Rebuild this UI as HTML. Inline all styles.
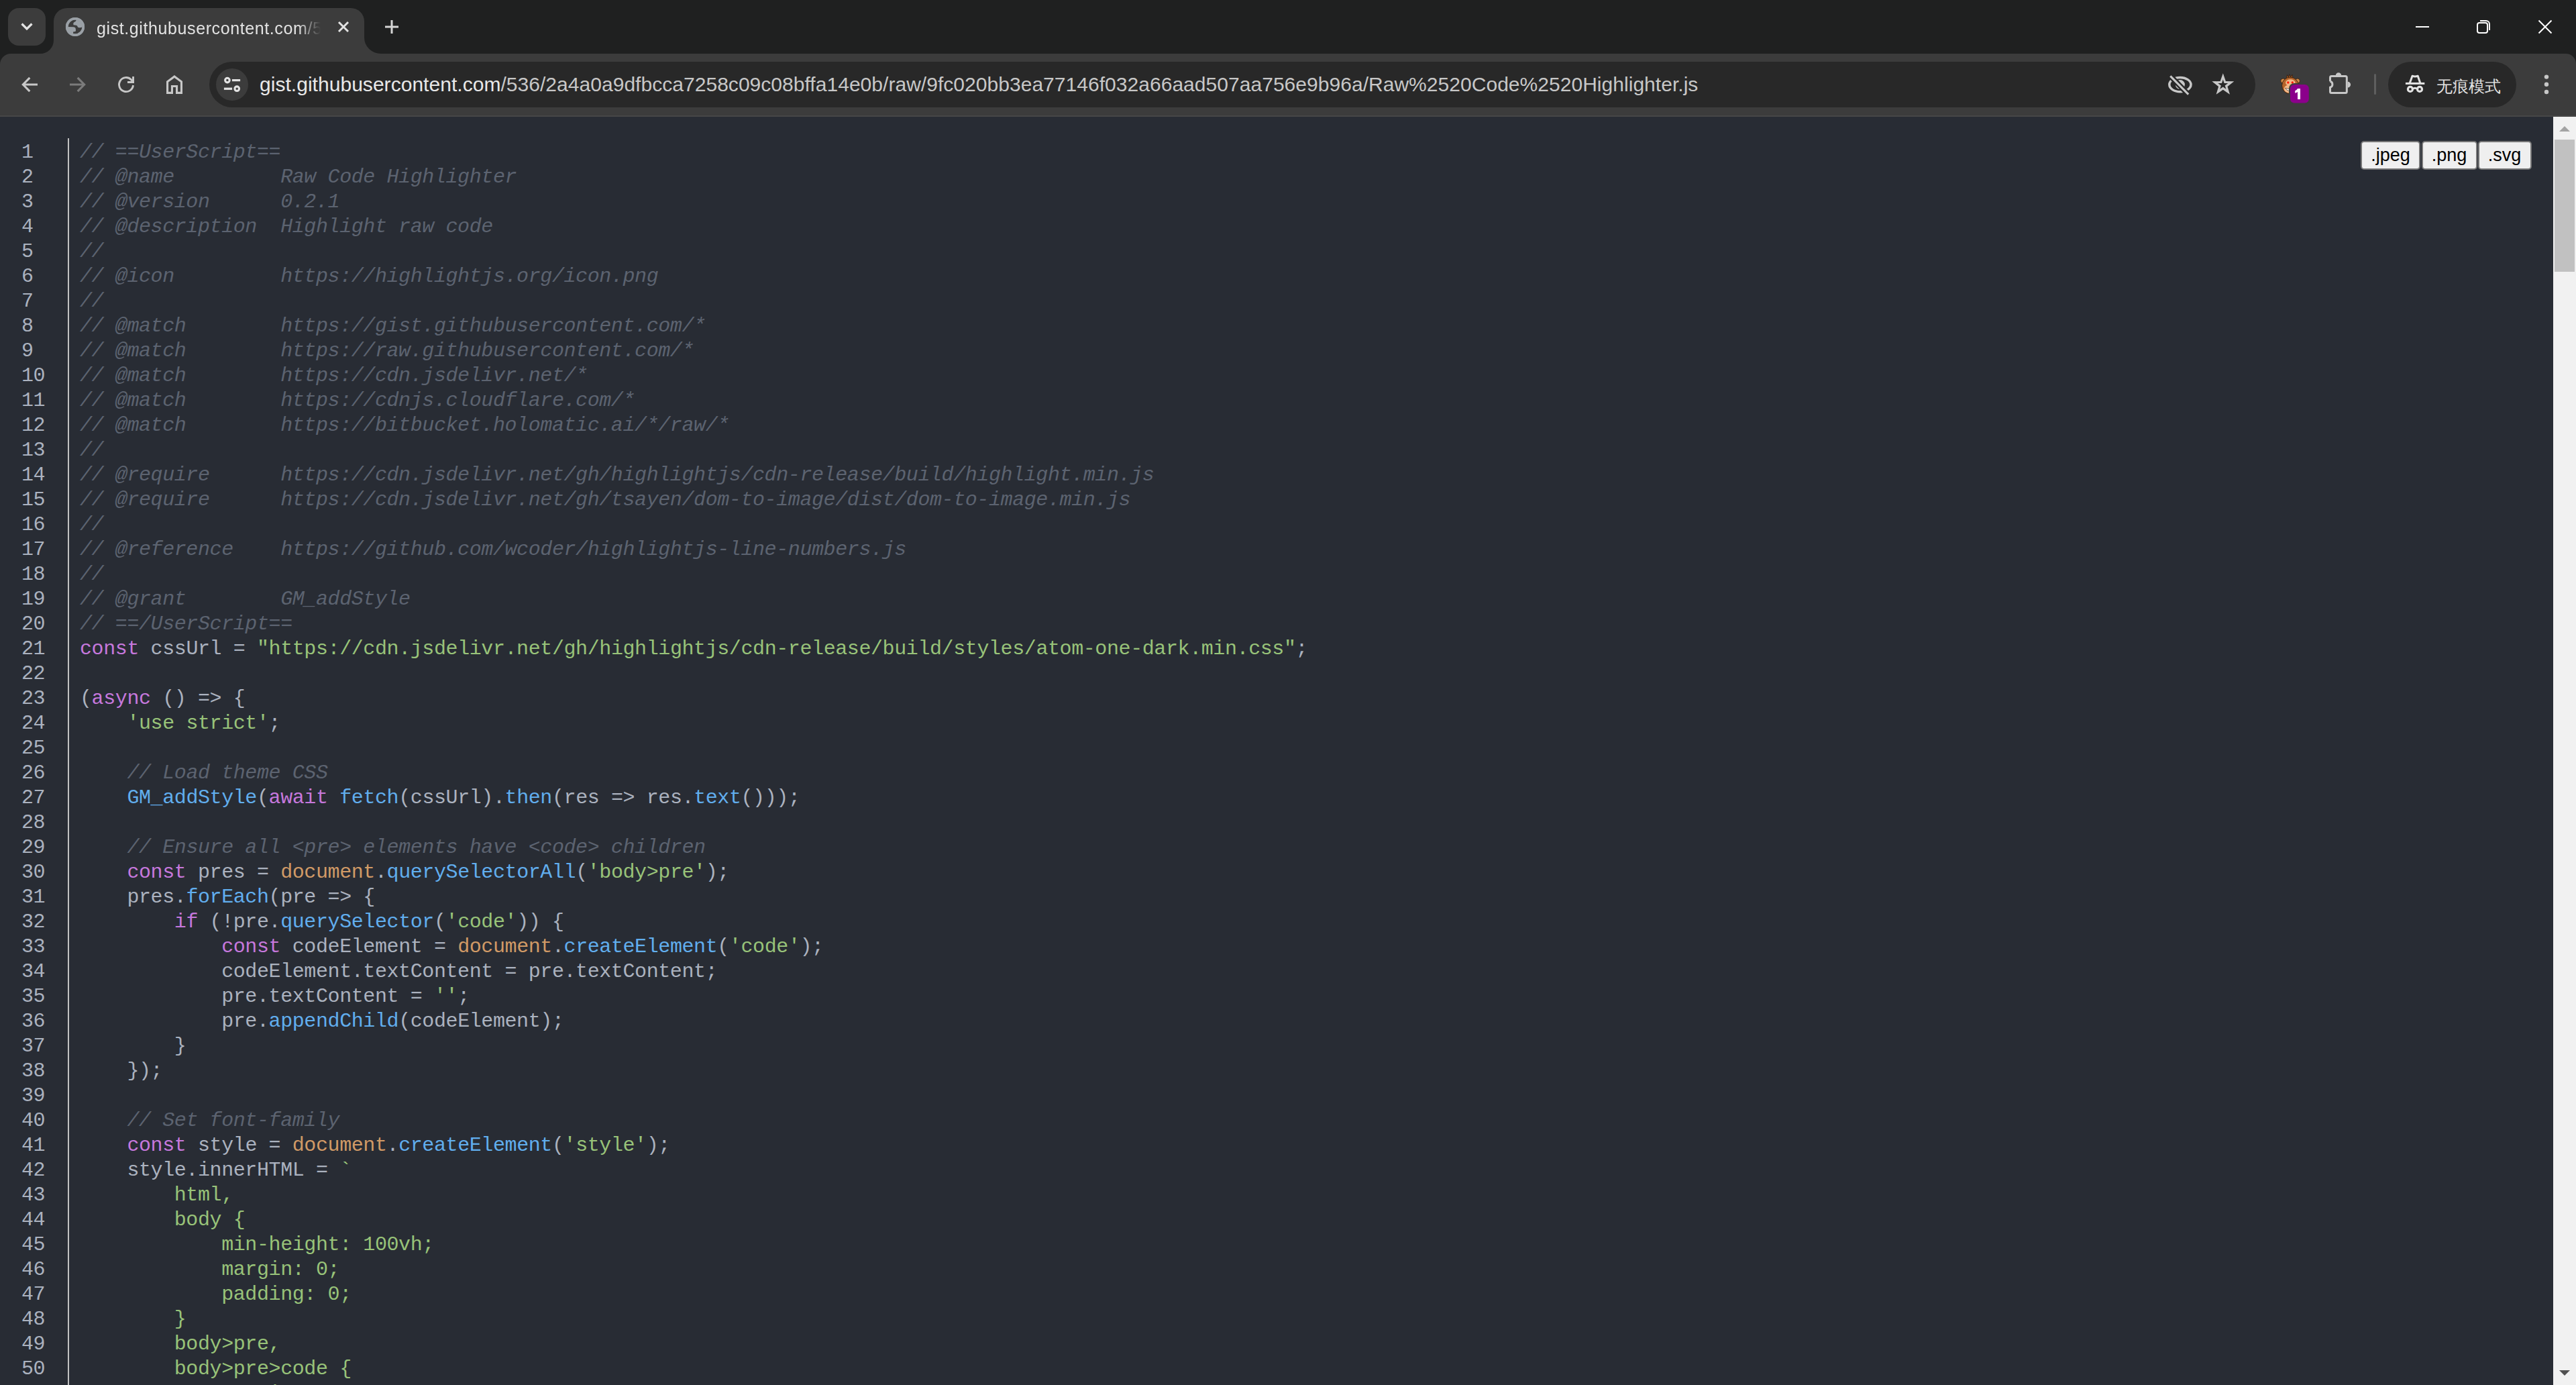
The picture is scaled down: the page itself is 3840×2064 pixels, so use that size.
<!DOCTYPE html>
<html><head><meta charset="utf-8">
<style>
*{margin:0;padding:0;box-sizing:border-box}
html,body{width:3840px;height:2064px;overflow:hidden;background:#282c34;font-family:"Liberation Sans",sans-serif}
.a{position:absolute}
#titlebar{left:0;top:0;width:3840px;height:174px;background:#1f2020}
#toolbar{left:0;top:80px;width:3840px;height:92px;background:#3c3c3c;border-radius:16px 15px 0 0}
#tbborder{left:0;top:172px;width:3840px;height:2px;background:#474747}
#ddbtn{left:12px;top:12px;width:56px;height:56px;border-radius:16px;background:#3c3c3c}
#tab{left:80px;top:12px;width:463px;height:70px;background:#3c3c3c;border-radius:20px 20px 0 0}
#tabtitle{left:144px;top:24px;width:338px;height:36px;overflow:hidden;white-space:nowrap;font-size:25px;letter-spacing:0.6px;line-height:36px;color:#e3e3e3;
 -webkit-mask-image:linear-gradient(to right,#000 0,#000 300px,transparent 334px)}
#omni{left:312px;top:92px;width:3050px;height:68px;border-radius:34px;background:#282828}
#siteinfo{left:322px;top:102px;width:48px;height:48px;border-radius:24px;background:#3c3c3c}
#url{left:387px;top:106px;height:40px;white-space:nowrap;font-size:30px;letter-spacing:0.035px;line-height:40px;color:#c7c7c7}
#url span{color:#e8e8e8}
#incog{left:3560px;top:92px;width:191px;height:68px;border-radius:34px;background:#282828}
#incogtxt{left:3632px;top:108.5px;font-size:24px;line-height:40px;color:#e3e3e3;white-space:nowrap}
#sep{left:3539px;top:110px;width:3px;height:31px;border-radius:2px;background:#5e5e5e}
#badge{left:3414px;top:126px;width:28px;height:28px;border-radius:6px;background:#8b008b;color:#fff;font-weight:bold;font-size:22px;line-height:28px;text-align:center}
#scroll{left:3806px;top:174px;width:34px;height:1890px;background:#f1f1f1}
#thumb{left:3808px;top:208px;width:30px;height:197px;background:#c1c1c1}
.btn{top:210px;height:43px;background:#efefef;border:2px solid #767676;border-radius:5px;color:#000;font-size:27px;line-height:38px;text-align:center}
#nums{left:32px;top:209px;font-family:"Liberation Mono",monospace;font-size:30px;line-height:37px;letter-spacing:-0.406px;color:#abb2bf;white-space:pre}
#vsep{left:101px;top:206px;width:2px;height:1860px;background:#c2c2c2}
#code{left:119px;top:209px;font-family:"Liberation Mono",monospace;font-size:30px;line-height:37px;letter-spacing:-0.406px;color:#abb2bf;white-space:pre}
#code i{color:#5c6370;font-style:italic}
#code b{font-weight:normal}
#code .k{color:#c678dd}
#code .s{color:#98c379}
#code .f{color:#61aeee}
#code .v{color:#d19a66}
svg{position:absolute;overflow:visible}
</style></head><body>
<div class="a" id="titlebar"></div>
<div class="a" id="toolbar"></div>
<div class="a" id="tbborder"></div>
<div class="a" id="ddbtn"></div>
<div class="a" id="tab"></div>
<!-- tab flares -->
<svg style="left:60px;top:60px" width="20" height="22"><path d="M0 20 A20 20 0 0 0 20 0 L20 22 L0 22 Z" fill="#3c3c3c"/></svg>
<svg style="left:543px;top:56px" width="25" height="26"><path d="M25 24 A25 24 0 0 1 0 0 L0 26 L25 26 Z" fill="#3c3c3c"/></svg>
<!-- chevron -->
<svg style="left:28px;top:30px" width="24" height="20"><path d="M4.5 5.5 L12 13 L19.5 5.5" fill="none" stroke="#e3e3e3" stroke-width="3.2"/></svg>
<!-- globe -->
<svg style="left:98px;top:26px" width="28" height="28" viewBox="0 0 28 28"><circle cx="14" cy="14" r="14" fill="#9aa0a6"/><circle cx="14" cy="14" r="10.6" fill="#3c3c3c"/><path d="M15.76 3.2 Q15.4 5 15 5.6 Q14 6.6 12.6 6.9 Q11.3 7.6 11.3 9 L11.5 11.3 Q14.5 11.6 16.5 12.1 Q17.6 13 17.8 14.2 Q18.8 15.3 20.7 15.2 Q23 15 24.8 13.9 A11.6 11.6 0 0 0 15.76 3.2Z M3.2 13.9 L11.6 14.2 Q13.9 14.6 14.5 15.8 Q15 17.5 15 19.4 Q14.9 20.7 14.2 20.9 L11.1 21.4 L11.1 24.4 A11.6 11.6 0 0 1 3.2 13.9Z" fill="#9aa0a6"/><circle cx="14" cy="14" r="12.25" fill="none" stroke="#9aa0a6" stroke-width="3.7"/></svg>
<div class="a" id="tabtitle">gist.githubusercontent.com/536/2a4a0a9dfbcca7258c</div>
<!-- tab close -->
<svg style="left:503px;top:31px" width="18" height="18"><path d="M2 2 L16 16 M16 2 L2 16" stroke="#e3e3e3" stroke-width="3"/></svg>
<!-- new tab -->
<svg style="left:574px;top:30px" width="20" height="20"><path d="M10 0 V20 M0 10 H20" stroke="#d5d5d5" stroke-width="3"/></svg>
<!-- window controls -->
<svg style="left:3601px;top:39px" width="20" height="3"><rect width="20" height="2" fill="#fff"/></svg>
<svg style="left:3692px;top:30px" width="20" height="20"><rect x="1" y="4" width="15" height="15" rx="3" fill="none" stroke="#fff" stroke-width="2"/><path d="M5 1 H14 A5 5 0 0 1 19 6 V15" fill="none" stroke="#fff" stroke-width="2"/></svg>
<svg style="left:3784px;top:30px" width="20" height="20"><path d="M0.5 0.5 L19.5 19.5 M19.5 0.5 L0.5 19.5" stroke="#fff" stroke-width="2"/></svg>
<!-- nav icons -->
<svg style="left:32px;top:114px" width="24" height="24"><path d="M24 12 H3.5 M12.3 1.8 L2.3 12 L12.3 22.2" fill="none" stroke="#c7c7c7" stroke-width="3.1"/></svg>
<svg style="left:104px;top:114px" width="24" height="24"><path d="M0 12 H20.5 M11.7 1.8 L21.7 12 L11.7 22.2" fill="none" stroke="#7b7b7b" stroke-width="3.1"/></svg>
<svg style="left:176px;top:114px" width="25" height="25"><path d="M22.5 13 A10.5 10.5 0 1 1 19.4 4.6 L22 7.5" fill="none" stroke="#c7c7c7" stroke-width="2.9"/><path d="M24 0 V10 H14 V7.1 H21.1 V0 Z" fill="#c7c7c7"/></svg>
<svg style="left:248px;top:112px" width="24" height="28"><path fill-rule="evenodd" d="M0 28 V9 L12 0 L24 9 V28 H14 V18.1 H10 V28 Z M3.1 24.8 H6.9 V15 H17.1 V24.8 H20.9 V10.6 L12 4 L3.1 10.6 Z" fill="#c7c7c7"/></svg>
<div class="a" id="omni"></div>
<div class="a" id="siteinfo"></div>
<svg style="left:334px;top:115px" width="26" height="24"><circle cx="4.9" cy="4.6" r="3.3" fill="none" stroke="#e3e3e3" stroke-width="3.1"/><rect x="11.9" y="3" width="12.2" height="3.2" fill="#e3e3e3"/><circle cx="19.2" cy="17.2" r="3.3" fill="none" stroke="#e3e3e3" stroke-width="3.1"/><rect x="-0.1" y="15.6" width="12.2" height="3.3" fill="#e3e3e3"/></svg>
<div class="a" id="url"><span>gist.githubusercontent.com</span>/536/2a4a0a9dfbcca7258c09c08bffa14e0b/raw/9fc020bb3ea77146f032a66aad507aa756e9b96a/Raw%2520Code%2520Highlighter.js</div>
<!-- eye slash + star -->
<svg style="left:3226px;top:104px" width="114" height="44" viewBox="0 0 114 44"><ellipse cx="23.9" cy="22.1" rx="16.1" ry="10.6" fill="none" stroke="#c7c7c7" stroke-width="3.5"/><circle cx="23.9" cy="22.1" r="7" fill="#c7c7c7"/><path d="M8.8 8.8 L36.7 37.2" stroke="#282828" stroke-width="8"/><path d="M9.3 9.3 L36.2 36.7" stroke="#c7c7c7" stroke-width="3.1"/>
<path fill-rule="evenodd" fill="#c7c7c7" d="M87.8 5.3 L91.9 16.9 L104.3 17.3 L94.5 24.9 L98 36.7 L87.8 29.7 L77.6 36.7 L81.1 24.9 L71.3 17.3 L83.7 16.9 Z M87.8 14.6 L89.6 20 L95.3 20 L90.7 23.4 L92.4 28.8 L87.8 25.5 L83.2 28.8 L84.9 23.4 L80.3 20 L86 20 Z"/></svg>
<!-- tampermonkey -->
<svg style="left:3396px;top:106px" width="50" height="50" viewBox="0 0 50 50">
<path d="M12 11 L13.6 5.6 L15.5 9 L17 4.8 L18.6 8.8 L21 5.2 L21.5 11 Z" fill="#a85a22" stroke="#2a160a" stroke-width="0.7"/>
<circle cx="7.4" cy="14.6" r="3.6" fill="#d08a4a" stroke="#2a160a" stroke-width="0.8"/>
<circle cx="28.8" cy="14.6" r="3.6" fill="#d08a4a" stroke="#2a160a" stroke-width="0.8"/>
<circle cx="18" cy="21.5" r="12.4" fill="#b5642a" stroke="#2a160a" stroke-width="0.8"/>
<ellipse cx="18.3" cy="17.3" rx="7.2" ry="5" fill="#f2b98a"/>
<ellipse cx="17.5" cy="26.5" rx="8.8" ry="6.2" fill="#f2b98a"/>
<circle cx="14.8" cy="17" r="1.7" fill="#ff1a00"/><circle cx="21.3" cy="17" r="1.7" fill="#ff1a00"/>
<path d="M10.5 25.2 L17 26.8 L16.5 29.5 Q12.5 28.8 10.5 25.2Z" fill="#fff" stroke="#2a160a" stroke-width="0.6"/>
<rect x="16" y="18" width="31.8" height="31.6" rx="8" fill="#3c3c3c"/>
<rect x="18" y="20" width="27.8" height="27.6" rx="6" fill="#8b008b"/>
<path d="M29 26 H33 V42 H29 V31 Q27.5 32.3 25.2 32.8 V29.2 Q27.8 28.3 29 26Z" fill="#fff"/>
</svg>
<!-- puzzle -->
<svg style="left:3466px;top:104px" width="44" height="44" viewBox="0 0 44 44"><path d="M7.5 17.3 V11.4 A2 2 0 0 1 9.5 9.4 H30.3 A2 2 0 0 1 32.3 11.4 V32.4 A2 2 0 0 1 30.3 34.4 H9.5 A2 2 0 0 1 7.5 32.4 V26.2 A4.6 4.6 0 0 0 7.5 17.3" fill="none" stroke="#c7c7c7" stroke-width="3"/><path d="M15.8 8.5 A4.2 4.2 0 0 1 24.2 8.5 Z M33.8 17.8 A4.3 4.3 0 0 1 33.8 26.4 Z" fill="#c7c7c7"/></svg>
<div class="a" id="sep"></div>
<div class="a" id="incog"></div>
<svg style="left:3580px;top:104px" width="44" height="44" viewBox="0 0 44 44"><rect x="5.9" y="18.9" width="28.4" height="3" fill="#e3e3e3"/><path d="M12.3 19.5 L16 9.2 Q20 10.8 24.2 9.2 L27.7 19.5" fill="none" stroke="#e3e3e3" stroke-width="3" stroke-linejoin="round"/><circle cx="12.9" cy="28.9" r="3.5" fill="none" stroke="#e3e3e3" stroke-width="3.2"/><circle cx="27" cy="28.9" r="3.5" fill="none" stroke="#e3e3e3" stroke-width="3.2"/><path d="M16.2 28.6 Q20 26 23.7 28.6" fill="none" stroke="#e3e3e3" stroke-width="3"/></svg>
<div class="a" id="incogtxt">无痕模式</div>
<!-- kebab -->
<svg style="left:3790px;top:108px" width="12" height="36"><circle cx="6" cy="6.6" r="3.2" fill="#c7c7c7"/><circle cx="6" cy="17.8" r="3.2" fill="#c7c7c7"/><circle cx="6" cy="29" r="3.2" fill="#c7c7c7"/></svg>

<!-- content -->
<div class="a" id="vsep"></div>
<div class="a" id="nums">1
2
3
4
5
6
7
8
9
10
11
12
13
14
15
16
17
18
19
20
21
22
23
24
25
26
27
28
29
30
31
32
33
34
35
36
37
38
39
40
41
42
43
44
45
46
47
48
49
50
51</div>
<div class="a" id="code"><i>// ==UserScript==</i>
<i>// @name         Raw Code Highlighter</i>
<i>// @version      0.2.1</i>
<i>// @description  Highlight raw code</i>
<i>//</i>
<i>// @icon         https://highlightjs.org/icon.png</i>
<i>//</i>
<i>// @match        https://gist.githubusercontent.com/*</i>
<i>// @match        https://raw.githubusercontent.com/*</i>
<i>// @match        https://cdn.jsdelivr.net/*</i>
<i>// @match        https://cdnjs.cloudflare.com/*</i>
<i>// @match        https://bitbucket.holomatic.ai/*/raw/*</i>
<i>//</i>
<i>// @require      https://cdn.jsdelivr.net/gh/highlightjs/cdn-release/build/highlight.min.js</i>
<i>// @require      https://cdn.jsdelivr.net/gh/tsayen/dom-to-image/dist/dom-to-image.min.js</i>
<i>//</i>
<i>// @reference    https://github.com/wcoder/highlightjs-line-numbers.js</i>
<i>//</i>
<i>// @grant        GM_addStyle</i>
<i>// ==/UserScript==</i>
<b class=k>const</b> cssUrl = <b class=s>"https://cdn.jsdelivr.net/gh/highlightjs/cdn-release/build/styles/atom-one-dark.min.css"</b>;

(<b class=k>async</b> () =&gt; {
    <b class=s>'use strict'</b>;

    <i>// Load theme CSS</i>
    <b class=f>GM_addStyle</b>(<b class=k>await</b> <b class=f>fetch</b>(cssUrl).<b class=f>then</b>(res =&gt; res.<b class=f>text</b>()));

    <i>// Ensure all &lt;pre&gt; elements have &lt;code&gt; children</i>
    <b class=k>const</b> pres = <b class=v>document</b>.<b class=f>querySelectorAll</b>(<b class=s>'body&gt;pre'</b>);
    pres.<b class=f>forEach</b>(pre =&gt; {
        <b class=k>if</b> (!pre.<b class=f>querySelector</b>(<b class=s>'code'</b>)) {
            <b class=k>const</b> codeElement = <b class=v>document</b>.<b class=f>createElement</b>(<b class=s>'code'</b>);
            codeElement.textContent = pre.textContent;
            pre.textContent = <b class=s>''</b>;
            pre.<b class=f>appendChild</b>(codeElement);
        }
    });

    <i>// Set font-family</i>
    <b class=k>const</b> style = <b class=v>document</b>.<b class=f>createElement</b>(<b class=s>'style'</b>);
    style.innerHTML = <b class=s>`</b>
<b class=s>        html,</b>
<b class=s>        body {</b>
<b class=s>            min-height: 100vh;</b>
<b class=s>            margin: 0;</b>
<b class=s>            padding: 0;</b>
<b class=s>        }</b>
<b class=s>        body&gt;pre,</b>
<b class=s>        body&gt;pre&gt;code {</b>
<b class=s>            margin: 0;</b></div>
<div class="a btn" style="left:3519px;width:89px">.jpeg</div>
<div class="a btn" style="left:3609.5px;width:83px">.png</div>
<div class="a btn" style="left:3693.5px;width:80px">.svg</div>
<div class="a" id="scroll"></div>
<svg style="left:3815px;top:188px" width="16" height="8"><path d="M0 8 L8 0 L16 8Z" fill="#a3a3a3"/></svg>
<div class="a" id="thumb"></div>
<svg style="left:3815px;top:2042px" width="16" height="8"><path d="M0 0 L16 0 L8 8Z" fill="#505050"/></svg>
</body></html>
